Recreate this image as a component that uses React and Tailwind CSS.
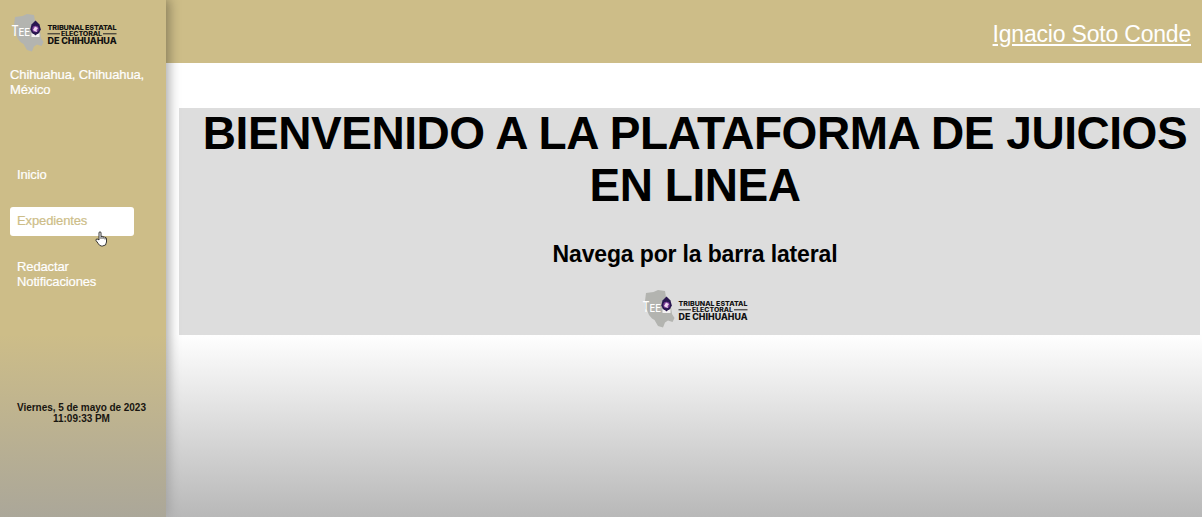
function Logo({ className }) {
  return (
    <svg viewBox="0 0 108 40" className={className} fontFamily="Inter, 'Liberation Sans', sans-serif">
      <path
        d="M4 12 L5 4 L12.500 3 L17 1 L24 2 L25 8 L29 11 L31 25 L33.500 29 L31.500 33 L27 31.500 L24 33.500 L22 38.500 L17 37 L13.500 31 L11 29.500 L8 26 L6 21 L4 20 Z"
        fill="#b3b4b0"
      />
      <g fill="#fff" fontWeight="500">
        <text x="1.500" y="22.500" fontSize="14" textLength="7" lengthAdjust="spacingAndGlyphs">T</text>
        <text x="8.500" y="22.500" fontSize="11" textLength="11.500" lengthAdjust="spacingAndGlyphs">EE</text>
      </g>
      <path d="M25.500 7.500 L29.500 11.500 L30.800 16.500 L28.500 21 L22.500 21 L20.300 16.500 L21.500 11.500 Z" fill="#291750" />
      <circle cx="25.500" cy="16" r="3.200" fill="#7c3c98" />
      <path d="M23 17 L25 13.500 L28 15 L26.500 17 L27 19 L24.500 18 Z" fill="#efd8ef" />
      <path d="M21.500 20 L25.500 22 L29.500 20 V24 H21.500 Z" fill="#f3f1f1" />
      <path d="M22.500 19.500 L25.500 22.500 L28.500 19.500 Z" fill="#291750" />
      <g fill="#111" fontWeight="800">
        <text x="37.500" y="17" fontSize="6.500" textLength="69" lengthAdjust="spacingAndGlyphs">TRIBUNAL ESTATAL</text>
        <text x="51" y="23" fontSize="6" textLength="41" lengthAdjust="spacingAndGlyphs">ELECTORAL</text>
        <text x="37.500" y="30.500" fontSize="8.600" textLength="69" lengthAdjust="spacingAndGlyphs">DE CHIHUAHUA</text>
      </g>
      <path d="M37.500 20.800 H50 M93 20.800 H106.500" stroke="#222" strokeWidth="1" />
    </svg>
  );
}

function Cursor() {
  return (
    <svg viewBox="0 0 12 16" className="absolute left-[85px] top-[24px] h-4 w-3">
      <path
        d="M4 9 V2 Q4 .8 5 .8 Q6 .8 6 2 V5.500 Q7.500 4.700 8 6 Q9.500 5.200 10 6.600 Q11.500 6.300 11.500 8 V11 Q11.500 15 7.500 15 H6.500 Q4.500 15 3.200 12.500 L1 9.500 Q.5 8.200 2 8 Q3 8 4 9 Z"
        fill="#fff"
        stroke="#222"
        strokeWidth=".9"
      />
      <path d="M6 5.500 V8 M8 6 V8 M10 6.600 V8.500" stroke="#222" strokeWidth=".8" />
    </svg>
  );
}

export default function App() {
  return (
    <div className="relative flex h-[517px] w-[1202px] overflow-hidden bg-white font-['Liberation_Sans',Arial,sans-serif]">
      <aside className="relative flex w-[166px] shrink-0 flex-col bg-[#cdbd88] text-[13px] leading-[14.500px] tracking-[-0.12px] text-white shadow-[2px_0_11px_1px_rgba(0,0,0,0.34)]">
        <Logo className="ml-[10px] mt-[13px] h-10 w-[108px] shrink-0" />
        <p className="ml-[10px] mt-[15px] [-webkit-text-stroke:0.2px_white]">
          Chihuahua, Chihuahua,
          <br />
          México
        </p>
        <nav className="ml-[10px] mt-[64px] flex w-[124px] flex-col gap-[17px]">
          <a className="px-[7px] py-[7px] [-webkit-text-stroke:0.2px_white]">Inicio</a>
          <a className="relative rounded-[3px] bg-white px-[7px] pb-[7.500px] pt-[7px] text-[#cdbd88] [-webkit-text-stroke:0.2px_#cdbd88]">
            Expedientes
            <Cursor />
          </a>
          <a className="px-[7px] pb-[7px] pt-[7.500px] [-webkit-text-stroke:0.2px_white]">
            Redactar
            <br />
            Notificaciones
          </a>
        </nav>
        <p className="relative z-30 mt-[106px] pr-[3px] text-center text-[10px] font-bold leading-[11px] tracking-[-0.04px] text-[#181510]">
          Viernes, 5 de mayo de 2023
          <br />
          11:09:33 PM
        </p>
      </aside>
      <div className="flex grow flex-col">
        <header className="flex h-[63px] items-center justify-end bg-[#cdbd88] pr-[11px] pt-1">
          <a className="text-[23px] leading-7 tracking-[-0.2px] text-white underline decoration-[1.500px] underline-offset-2">Ignacio Soto Conde</a>
        </header>
        <main className="ml-[13px] mr-[2px] mt-[45px] flex h-[227px] flex-col items-center bg-[#dddddd] pl-[11px] text-black">
          <h1 className="-mt-px whitespace-nowrap text-center text-[46px] font-bold leading-[52px] tracking-[-0.45px]">
            BIENVENIDO A LA PLATAFORMA DE JUICIOS
            <br />
            EN LINEA
          </h1>
          <h2 className="mt-[29px] text-[23px] font-bold leading-7 tracking-[-0.15px]">Navega por la barra lateral</h2>
          <Logo className="mt-[21px] h-10 w-[108px]" />
        </main>
      </div>
      <div className="pointer-events-none absolute inset-x-0 bottom-0 z-20 h-[183px] bg-linear-to-b from-[#9f9f9f]/0 to-[#9f9f9f]/74" />
    </div>
  );
}
